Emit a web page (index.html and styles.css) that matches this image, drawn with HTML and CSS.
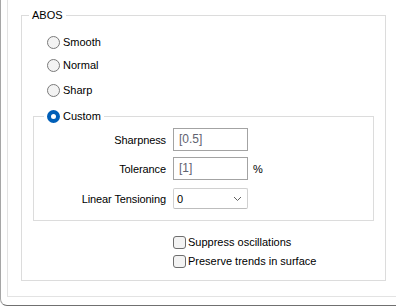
FILE: index.html
```html
<!DOCTYPE html>
<html>
    <head>
        <title>ABOS</title>
        <meta charset="UTF-8">
        <link rel="stylesheet" href="styles.css">
    </head>
    <body>
        <div class="window">
            <div class="panel">
                <div class="group abos">
                    <div class="group-title">ABOS</div>

                    <div class="radio-row smooth"><span class="radio"></span>Smooth</div>
                    <div class="radio-row normal"><span class="radio"></span>Normal</div>
                    <div class="radio-row sharp"><span class="radio"></span>Sharp</div>

                    <div class="group custom">
                        <div class="radio-row group-title"><span class="radio checked"></span>Custom</div>

                        <div class="field-row row-sharpness">
                            <span class="field-label">Sharpness</span>
                            <span class="text-box">[0.5]</span>
                        </div>
                        <div class="field-row row-tolerance">
                            <span class="field-label">Tolerance</span>
                            <span class="text-box">[1]</span>
                            <span class="unit">%</span>
                        </div>
                        <div class="field-row row-tension">
                            <span class="field-label">Linear Tensioning</span>
                            <span class="combo">
                                <span>0</span>
                                <svg width="9" height="6" viewBox="0 0 9 6"><path d="M1 1 L4.5 4.5 L8 1" fill="none" stroke="#606060" stroke-width="1"/></svg>
                            </span>
                        </div>
                    </div>

                    <div class="check-row first"><span class="check"></span>Suppress oscillations</div>
                    <div class="check-row"><span class="check"></span>Preserve trends in surface</div>
                </div>
            </div>
        </div>
    </body>
</html>
```

FILE: styles.css
```css
body {
    margin: 0;
    background: white;
    color: black;
    font-family: "Liberation Sans", Arial, sans-serif;
    font-size: 11px;
}
.window {
    height: 306px;
    box-sizing: border-box;
    border-left: 1px solid #a6a6a6;
    border-bottom: 1px solid #707070;
    border-bottom-left-radius: 7px;
    padding: 0 0 8px 6px;
}
.panel {
    height: 100%;
    box-sizing: border-box;
    border-left: 1px solid #e3e3e3;
    border-bottom: 1px solid #e3e3e3;
    padding-top: 15px;
}
.group {
    display: flex;
    flex-direction: column;
    align-items: flex-start;
    border: 1px solid #dcdcdc;
    box-sizing: border-box;
}
.abos {
    margin: 0 10px 0 13px;
    height: 266px;
}
.group-title {
    margin: -7px 0 0 7px;
    padding: 0 3px;
    line-height: 13px;
    background: white;
}
.radio-row {
    display: flex;
    align-items: center;
    height: 13px;
    line-height: 13px;
    margin-left: 25px;
}
.radio-row.smooth { margin-top: 14px; }
.radio-row.normal { margin-top: 10px; }
.radio-row.sharp { margin-top: 12px; }
.radio {
    width: 13px;
    height: 13px;
    box-sizing: border-box;
    border: 1px solid #7a7a7a;
    border-radius: 50%;
    background: #f3f3f3;
    margin-right: 3px;
    flex: none;
}
.radio.checked {
    border: 4px solid #005fb8;
    background: white;
}
.custom {
    align-self: stretch;
    margin: 19px 11px 0 11px;
    height: 105px;
}
.custom .group-title {
    margin: -7px 0 0 10px;
    padding: 0 3px;
}
.field-row {
    display: flex;
    align-items: center;
}
.row-sharpness { margin-top: 5px; }
.row-tolerance { margin-top: 6px; }
.row-tension { margin-top: 8px; }
.field-label {
    width: 132px;
    text-align: right;
    margin-right: 7px;
    letter-spacing: -0.1px;
}
.text-box {
    width: 75px;
    height: 23px;
    box-sizing: border-box;
    border: 1px solid #a3a3a3;
    padding-left: 5px;
    line-height: 21px;
    font-size: 12px;
    color: #5f6270;
}
.unit {
    margin-left: 5px;
}
.combo {
    display: flex;
    align-items: center;
    justify-content: space-between;
    width: 75px;
    height: 21px;
    box-sizing: border-box;
    border: 1px solid #d0d0d0;
    border-bottom-color: #bdbdbd;
    border-radius: 2px;
    padding: 0 5px 0 3px;
}
.check-row {
    display: flex;
    align-items: center;
    height: 13px;
    line-height: 13px;
    margin: 6px 0 0 151px;
}
.check-row.first { margin-top: 15px; }
.check {
    width: 13px;
    height: 13px;
    box-sizing: border-box;
    border: 1px solid #6e6e6e;
    border-radius: 3px;
    background: #f3f3f3;
    margin-right: 2px;
    flex: none;
}
```
